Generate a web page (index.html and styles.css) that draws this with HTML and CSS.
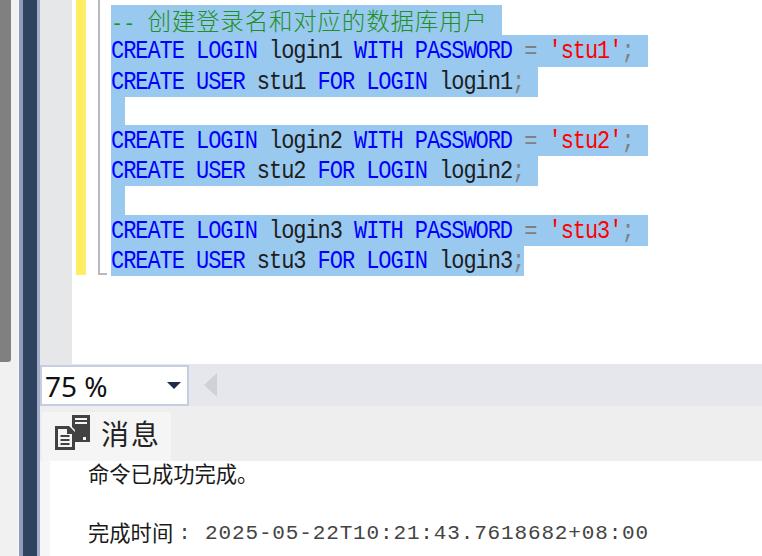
FILE: index.html
```html
<!DOCTYPE html>
<html lang="zh">
<head>
<meta charset="utf-8">
<title>SQL</title>
<link rel="stylesheet" href="styles.css">
</head>
<body>
<div class="app">
  <div class="outer-scroll"><div class="outer-thumb"></div></div>
  <div class="navy"></div>
  <div class="main">
    <div class="editor">
      <div class="gutter"></div>
      <div class="margin"><div class="yellow"></div></div>
      <div class="fold"></div>
      <div class="code">
        <div class="line"><span class="sel cm"><span class="dash">--</span> <span class="cjk">创建登录名和对应的数据库用户</span></span></div>
        <div class="line"><span class="sel"><span class="txt"><b>CREATE LOGIN</b> login1 <b>WITH PASSWORD</b> <i>=</i> <em>'stu1'</em><i>;</i></span></span></div>
        <div class="line"><span class="sel"><span class="txt"><b>CREATE USER</b> stu1 <b>FOR LOGIN</b> login1<i>;</i></span></span></div>
        <div class="line"><span class="sel"></span></div>
        <div class="line"><span class="sel"><span class="txt"><b>CREATE LOGIN</b> login2 <b>WITH PASSWORD</b> <i>=</i> <em>'stu2'</em><i>;</i></span></span></div>
        <div class="line"><span class="sel"><span class="txt"><b>CREATE USER</b> stu2 <b>FOR LOGIN</b> login2<i>;</i></span></span></div>
        <div class="line"><span class="sel"></span></div>
        <div class="line"><span class="sel"><span class="txt"><b>CREATE LOGIN</b> login3 <b>WITH PASSWORD</b> <i>=</i> <em>'stu3'</em><i>;</i></span></span></div>
        <div class="line"><span class="sel last"><span class="txt"><b>CREATE USER</b> stu3 <b>FOR LOGIN</b> login3<i>;</i></span></span></div>
      </div>
    </div>
    <div class="zoombar">
      <div class="combo"><span class="pct">75 %</span><span class="caret"></span></div>
      <span class="arrow"></span>
    </div>
    <div class="tabs">
      <div class="tab">
        <svg class="tab-icon" width="36" height="36" viewBox="0 0 36 36">
          <path d="M0 11h14l6 6v18H0z" fill="#424242"/>
          <path d="M3 14h9v5h5v13H3z" fill="#f5f5f5"/>
          <path d="M5.500 20h9v2h-9zM5.500 24h9v2h-9zM5.500 28h9v2h-9z" fill="#424242"/>
          <path d="M17 0h18v27H20V15l-3-3z" fill="#424242"/>
          <path d="M20 3h12v2H20zM20 7h12v2H20z" fill="#f5f5f5"/>
          <rect x="28" y="22" width="3" height="3" fill="#f5f5f5"/>
        </svg>
        <span class="tab-label">消息</span>
      </div>
    </div>
    <div class="output">
      <div class="msg">命令已成功完成。</div>
      <div class="time"><span>完成时间</span><span class="stamp">: 2025-05-22T10:21:43.7618682+08:00</span></div>
    </div>
  </div>
</div>
</body>
</html>
```
FILE: styles.css
```css
* { box-sizing: border-box; }
html, body { margin: 0; height: 100%; }
body { overflow: hidden; background: #fff; font-family: "Noto Sans", "Noto Sans CJK SC", sans-serif; }
.app { display: flex; width: 762px; height: 556px; }

.outer-scroll { width: 19px; background: #f1f1f1; border-right: 1px solid #f8f8f8; flex: none; }
.outer-thumb { width: 11px; height: 362px; background: #808080; border-radius: 0 0 3px 0; }
.navy { width: 21px; flex: none; background: #2f4360; border-left: 4px solid #8f9bb8; border-right: 3px solid #a3aecb; }

.main { flex: 1; min-width: 0; display: flex; flex-direction: column; }

.editor { height: 364px; flex: none; display: flex; background: #fff; }
.gutter { width: 32px; background: #e6e7e9; }
.margin { width: 26px; padding-left: 4px; }
.yellow { width: 10px; height: 275px; background: #ffee62; }
.fold { position: relative; width: 2px; height: 275px; background: #b9b9b9; }
.fold::after { content: ""; position: absolute; left: 0; bottom: 0; width: 9px; height: 2px; background: #b9b9b9; }

.code {
  margin-left: 11px;
  flex: 1;
  display: grid;
  align-content: start;
  padding-top: 5px;
  grid-template-rows: 30px 32px 30px 28px 31px 30px 29px 31px 30px;
  font-family: "Liberation Mono", monospace;
  font-size: 20.250px;
  color: #1e1e1e;
  white-space: pre;
}
.line { display: flex; }
.sel { display: flex; align-items: center; white-space: pre; background: #99c9ef; padding-right: 14px; min-width: 14px; }
.sel.last { padding-right: 0; }
.txt { display: inline-block; font-size: 22px; letter-spacing: -1.050px; line-height: 26px; transform: translateY(1px) scaleY(1.16); font-weight: normal; }
.sel b { font-weight: normal; color: #0000ff; }
.sel i { font-style: normal; color: #808080; }
.sel em { font-style: normal; color: #ff0000; }
.cm { color: #1f8f1f; display: block; line-height: 30px; }
.cjk { font-family: "Noto Sans CJK SC", sans-serif; font-size: 23.500px; letter-spacing: 0.800px; font-weight: 300; }

.zoombar { height: 42px; flex: none; background: #e6e7ed; display: flex; align-items: center; }
.combo { width: 149px; height: 41px; margin-top: 1px; background: #fff; border: 2px solid #c5cde0; display: flex; align-items: center; justify-content: space-between; padding: 0 6px 0 3px; }
.pct { font-size: 28px; color: #111; line-height: 1; }
.caret { width: 0; height: 0; border-left: 7px solid transparent; border-right: 7px solid transparent; border-top: 7px solid #1e2b4a; }
.arrow { margin-left: 15px; width: 0; height: 0; border-top: 12px solid transparent; border-bottom: 12px solid transparent; border-right: 13px solid #cfd1d8; }

.tabs { height: 55px; flex: none; background: #eeeeef; padding: 6px 0 0 2px; }
.tab { width: 129px; height: 49px; background: #f5f5f5; display: flex; align-items: flex-start; padding: 3px 0 0 13px; }
.tab-label { margin-left: 10px; font-size: 28px; line-height: 36px; letter-spacing: 2px; color: #222; font-weight: 400; font-family: "Noto Sans CJK SC", sans-serif; }
.tab-icon { flex: none; }

.output { flex: 1; min-height: 0; background: #fff; margin-left: 10px; padding: 1px 0 0 38px; color: #1a1a1a; box-shadow: -10px 0 0 #f6f6f6; }
.msg { font-size: 21.300px; line-height: 22px; font-family: "Noto Sans CJK SC", sans-serif; font-weight: 400; }
.time { margin-top: 33px; display: flex; align-items: center; line-height: 26px; font-size: 21.300px; font-family: "Noto Sans CJK SC", sans-serif; font-weight: 400; }
.stamp { margin-left: 5px; padding-top: 4px; font-family: "Liberation Mono", monospace; font-size: 21px; letter-spacing: 0.850px; color: #444; font-weight: normal; }
```
